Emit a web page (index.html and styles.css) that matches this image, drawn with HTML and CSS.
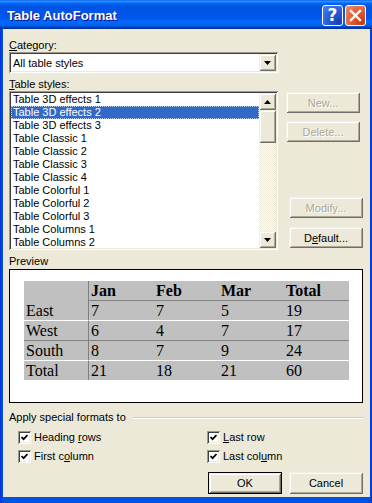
FILE: index.html
```html
<!DOCTYPE html>
<html lang="en">
  <head>
    <meta charset="UTF-8" />
    <title>Table AutoFormat</title>
    <link rel="stylesheet" href="styles.css">
  </head>
  <body>
    <div class="window">
      <!-- title bar -->
      <div class="titlebar">
        <span class="title">Table AutoFormat</span>
        <div class="title-buttons">
          <span class="tbtn help">?</span>
          <span class="tbtn close">
            <svg width="13" height="13" viewBox="0 0 13 13">
              <path d="M2 2 L11 11 M11 2 L2 11" stroke="#fff" stroke-width="2.4" stroke-linecap="square" fill="none" />
            </svg>
          </span>
        </div>
      </div>

      <div class="client">
        <!-- category -->
        <div class="label"><u>C</u>ategory:</div>
        <div class="combo field">
          <span class="combo-text">All table styles</span>
          <span class="dropbtn raised">
            <svg width="7" height="4" viewBox="0 0 7 4"><polygon points="0,0 7,0 3.5,4" fill="#000" /></svg>
          </span>
        </div>

        <!-- styles -->
        <div class="label gap5"><u>T</u>able styles:</div>
        <div class="styles-row">
          <div class="listbox field">
            <ul class="items">
              <li>Table 3D effects 1</li>
              <li class="selected">Table 3D effects 2</li>
              <li>Table 3D effects 3</li>
              <li>Table Classic 1</li>
              <li>Table Classic 2</li>
              <li>Table Classic 3</li>
              <li>Table Classic 4</li>
              <li>Table Colorful 1</li>
              <li>Table Colorful 2</li>
              <li>Table Colorful 3</li>
              <li>Table Columns 1</li>
              <li>Table Columns 2</li>
            </ul>
            <div class="scrollbar">
              <span class="sbtn raised">
                <svg width="7" height="4" viewBox="0 0 7 4"><polygon points="0,4 7,4 3.5,0" fill="#000" /></svg>
              </span>
              <span class="thumb raised"></span>
              <span class="track"></span>
              <span class="sbtn raised">
                <svg width="7" height="4" viewBox="0 0 7 4"><polygon points="0,0 7,0 3.5,4" fill="#000" /></svg>
              </span>
            </div>
          </div>
          <div class="side-buttons">
            <span class="btn raised disabled">New...</span>
            <span class="btn raised disabled mt8">Delete...</span>
            <span class="btn raised disabled shift mt55">Modify...</span>
            <span class="btn raised shift mt9"><span>D<u>e</u>fault...</span></span>
          </div>
        </div>

        <!-- preview -->
        <div class="label gap5">Preview</div>
        <div class="preview">
          <div class="ptable">
            <div class="cell first"></div>
            <div class="cell second b">Jan</div>
            <div class="cell b">Feb</div>
            <div class="cell b">Mar</div>
            <div class="cell b">Total</div>

            <div class="cell first row">East</div>
            <div class="cell second row grey">7</div>
            <div class="cell row grey">7</div>
            <div class="cell row grey">5</div>
            <div class="cell row grey">19</div>

            <div class="cell first row white">West</div>
            <div class="cell second row white">6</div>
            <div class="cell row white">4</div>
            <div class="cell row white">7</div>
            <div class="cell row white">17</div>

            <div class="cell first row grey">South</div>
            <div class="cell second row grey">8</div>
            <div class="cell row grey">7</div>
            <div class="cell row grey">9</div>
            <div class="cell row grey">24</div>

            <div class="cell first row white">Total</div>
            <div class="cell second row white">21</div>
            <div class="cell row white">18</div>
            <div class="cell row white">21</div>
            <div class="cell row white">60</div>
          </div>
        </div>

        <!-- special formats -->
        <div class="group-head">
          <span>Apply special formats to</span>
          <span class="etch"></span>
        </div>
        <div class="checks">
          <label class="check">
            <span class="box"><svg width="7" height="7" viewBox="0 0 7 7"><path d="M0.5 3 L2.6 5.2 L6.5 1" stroke="#000" stroke-width="1.7" fill="none" /></svg></span>
            <span>Heading <u>r</u>ows</span>
          </label>
          <label class="check">
            <span class="box"><svg width="7" height="7" viewBox="0 0 7 7"><path d="M0.5 3 L2.6 5.2 L6.5 1" stroke="#000" stroke-width="1.7" fill="none" /></svg></span>
            <span><u>L</u>ast row</span>
          </label>
          <label class="check">
            <span class="box"><svg width="7" height="7" viewBox="0 0 7 7"><path d="M0.5 3 L2.6 5.2 L6.5 1" stroke="#000" stroke-width="1.7" fill="none" /></svg></span>
            <span>First c<u>o</u>lumn</span>
          </label>
          <label class="check">
            <span class="box"><svg width="7" height="7" viewBox="0 0 7 7"><path d="M0.5 3 L2.6 5.2 L6.5 1" stroke="#000" stroke-width="1.7" fill="none" /></svg></span>
            <span>Last col<u>u</u>mn</span>
          </label>
        </div>

        <!-- footer -->
        <div class="footer">
          <span class="btn raised default">OK</span>
          <span class="btn raised tall">Cancel</span>
        </div>
      </div>
    </div>
  </body>
</html>
```

FILE: styles.css
```css
* {
  margin: 0;
  padding: 0;
  box-sizing: border-box;
}
body {
  background-color: #fff;
}
.window {
  display: flex;
  flex-direction: column;
  width: 372px;
  height: 503px;
  background: linear-gradient(to right, #0831d9 0, #0054e3 3px, #0054e3 369px, #0831d9 100%);
  font-family: "Liberation Sans", Tahoma, sans-serif;
  font-size: 11px;
  color: #000;
}
.window u {
  text-decoration: underline;
  text-underline-offset: 1px;
}

/* title bar */
.titlebar {
  display: flex;
  align-items: center;
  justify-content: space-between;
  height: 29px;
  padding: 0 6px 0 7px;
  background: linear-gradient(
    to bottom,
    #0058ee 0%,
    #3593ff 4%,
    #288eff 6%,
    #127dff 8%,
    #036ffc 10%,
    #0262ee 14%,
    #0057e5 20%,
    #0054e3 24%,
    #0055eb 56%,
    #005bf5 66%,
    #026afe 76%,
    #0062ef 86%,
    #0052d6 92%,
    #0040ab 94%,
    #003092 100%
  );
}
.title {
  color: #fff;
  font-weight: bold;
  font-size: 13px;
  text-shadow: 1px 1px #0f1089;
  padding-top: 1px;
}
.title-buttons {
  display: flex;
  gap: 2px;
  padding-top: 1px;
}
.tbtn {
  display: flex;
  justify-content: center;
  align-items: center;
  width: 21px;
  height: 21px;
  border: 1px solid #fff;
  border-radius: 3px;
  color: #fff;
}
.help {
  background: radial-gradient(circle at 85% 85%, #1941b8 0, #2459d8 45%, #4f82ee 100%);
  font-family: "DejaVu Sans", sans-serif;
  font-weight: bold;
  font-size: 17px;
  line-height: 1;
}
.close {
  background: radial-gradient(circle at 85% 85%, #c23b12 0, #e0582f 45%, #ed8f6d 100%);
}

/* client area */
.client {
  flex: 1;
  margin: 0 2px 6px 3px;
  padding: 10px 7px 0 6px;
  background-color: #ece9d8;
}
.label {
  height: 13px;
  line-height: 13px;
}
.gap5 {
  margin-top: 5px;
}

/* 3d borders */
.field {
  background-color: #fff;
  box-shadow: inset 1px 1px #9d9a8c, inset -1px -1px #fff, inset 2px 2px #3f3f3f,
    inset -2px -2px #ece9d8;
}
.raised {
  background-color: #ece9d8;
  box-shadow: inset 1px 1px #f1efe2, inset -1px -1px #716f64, inset 2px 2px #fff,
    inset -2px -2px #aca899;
}

/* combo */
.combo {
  display: flex;
  align-items: center;
  justify-content: space-between;
  width: 269px;
  height: 21px;
  padding: 2px;
}
.combo-text {
  padding-left: 2px;
}
.dropbtn {
  display: flex;
  justify-content: center;
  align-items: center;
  width: 17px;
  height: 17px;
}

/* listbox */
.styles-row {
  display: flex;
}
.listbox {
  display: flex;
  width: 269px;
  height: 159px;
  padding: 2px;
}
.items {
  flex: 1;
  list-style: none;
  overflow: hidden;
}
.items li {
  height: 13px;
  line-height: 13px;
  padding-left: 2px;
  white-space: nowrap;
}
.items .selected {
  background-color: #316ac5;
  color: #fff;
  outline: 1px dotted #b9cdee;
  outline-offset: -1px;
}
.scrollbar {
  display: flex;
  flex-direction: column;
  width: 17px;
}
.sbtn {
  display: flex;
  justify-content: center;
  align-items: center;
  height: 17px;
}
.thumb {
  height: 33px;
}
.track {
  flex: 1;
  background: repeating-conic-gradient(#fff 0 25%, #ece9d8 0 50%) 0 0 / 2px 2px;
}

/* push buttons */
.btn {
  display: flex;
  justify-content: center;
  align-items: center;
  width: 74px;
  height: 21px;
}
.disabled {
  color: #aca899;
  text-shadow: 1px 1px #fff;
}
.side-buttons {
  display: flex;
  flex-direction: column;
  margin-left: 8px;
  padding-top: 1px;
}
.shift {
  margin-left: 3px;
}
.mt8 {
  margin-top: 8px;
}
.mt9 {
  margin-top: 9px;
}
.mt55 {
  margin-top: 55px;
}

/* preview */
.preview {
  height: 134px;
  margin-top: 1px;
  padding: 11px 0 0 14px;
  background-color: #fff;
  border: 1px solid #000;
}
.ptable {
  display: grid;
  grid-template-columns: 64px 65px 65px 65px 66px;
  width: 325px;
  background-color: #c0c0c0;
  font-family: "Liberation Serif", "Times New Roman", serif;
  font-size: 16px;
}
.cell {
  height: 19px;
  line-height: 19px;
  padding-left: 3px;
  white-space: nowrap;
}
.cell.first {
  padding-left: 2px;
}
.cell.second {
  border-left: 1px solid #808080;
  padding-left: 2px;
}
.cell.b {
  font-weight: bold;
}
.cell.row {
  height: 20px;
  border-top: 1px solid transparent;
}
.cell.grey {
  border-top-color: #808080;
}
.cell.white {
  border-top-color: #fff;
}

/* special formats */
.group-head {
  display: flex;
  align-items: center;
  height: 13px;
  line-height: 13px;
  margin-top: 8px;
}
.etch {
  flex: 1;
  margin-left: 8px;
  border-top: 1px solid #d0d0bf;
  border-bottom: 1px solid #fff;
}
.checks {
  display: grid;
  grid-template-columns: 189px 1fr;
  row-gap: 6px;
  margin-top: 7px;
  padding-left: 9px;
}
.check {
  display: flex;
  align-items: center;
  gap: 3px;
  height: 13px;
  line-height: 13px;
}
.box {
  display: flex;
  justify-content: center;
  align-items: center;
  width: 13px;
  height: 13px;
  background-color: #fff;
  box-shadow: inset 1px 1px #9d9a8c, inset -1px -1px #fff, inset 2px 2px #3f3f3f,
    inset -2px -2px #ece9d8;
}

/* footer */
.footer {
  display: flex;
  justify-content: flex-end;
  gap: 7px;
  margin-top: 9px;
}
.tall {
  height: 22px;
}
.default {
  height: 22px;
  border: 1px solid #000;
}
```
